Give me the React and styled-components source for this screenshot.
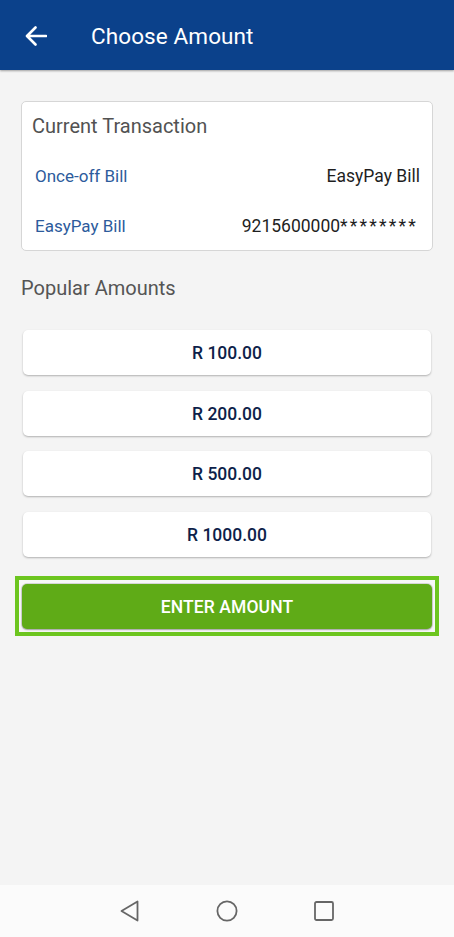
import React from "react";
import styled, { createGlobalStyle } from "styled-components";

const Global = createGlobalStyle`
  html, body { margin: 0; padding: 0; }
  body { font-family: Roboto, "Noto Sans", Arial, sans-serif; background: #f4f4f4; }
  * { box-sizing: border-box; }
`;

const Screen = styled.div`
  height: 100vh;
  display: flex;
  flex-direction: column;
  background: #f4f4f4;
`;

const Header = styled.header`
  height: 70px;
  flex: none;
  background: #0b418b;
  display: flex;
  align-items: center;
  padding-left: 24px;
  padding-top: 2px;
  box-shadow: 0 1px 2px rgba(0, 0, 0, 0.35);
  position: relative;
  z-index: 1;
`;

const BackButton = styled.button`
  border: 0;
  background: none;
  padding: 0;
  width: 23px;
  height: 22px;
  display: flex;
  align-items: center;
  justify-content: center;
  color: #fff;
`;

const Title = styled.h1`
  margin: 0 0 0 44px;
  font-size: 22.5px;
  font-weight: 400;
  color: #fff;
  letter-spacing: 0.1px;
`;

const Main = styled.main`
  flex: 1;
  padding: 31px 21px 0;
  display: flex;
  flex-direction: column;
`;

const Card = styled.section`
  background: #fff;
  border: 1px solid #d6d6d6;
  border-radius: 5px;
  display: flex;
  flex-direction: column;
  padding: 0 12px 0 10px;
`;

const CardTitle = styled.div`
  height: 49px;
  line-height: 49px;
  font-size: 20px;
  color: #525252;
`;

const InfoRow = styled.div`
  height: 50px;
  display: flex;
  align-items: center;
  justify-content: space-between;
  padding-left: 3px;
  margin-bottom: ${(p) => (p.$last ? "-1px" : "0")};
`;

const InfoLabel = styled.span`
  font-size: 17px;
  color: #2d5b9c;
`;

const InfoValue = styled.span`
  font-size: 17.5px;
  color: #1f1f1f;
  margin-right: ${(p) => p.$shift || 0}px;
`;

const Mask = styled.span`
  letter-spacing: 2.2px;
`;

const SectionTitle = styled.h2`
  margin: 25px 0 0;
  font-size: 20px;
  font-weight: 400;
  color: #555;
  line-height: 24px;
`;

const AmountList = styled.div`
  margin-top: 30px;
  display: flex;
  flex-direction: column;
  gap: 15.5px;
  padding: 0 2px;
`;

const AmountButton = styled.button`
  height: 45px;
  border: 0;
  border-radius: 5px;
  background: #fff;
  box-shadow: 0 1px 2px rgba(0, 0, 0, 0.28);
  font-family: Roboto, Arial, sans-serif;
  font-size: 17.5px;
  font-weight: 500;
  color: #0e1f4a;
  padding-top: 2px;
`;

const FocusRing = styled.div`
  margin: 19px -6px 0;
  border: 4px solid #6cc51f;
  padding: 4px 3px 3px;
  background: #f7f7f7;
`;

const PrimaryButton = styled.button`
  width: 100%;
  height: 45px;
  border: 0;
  border-radius: 5px;
  background: #5fab17;
  box-shadow: 0 0 0 1px rgba(0, 0, 0, 0.12), 0 1px 2px rgba(0, 0, 0, 0.25);
  color: #fff;
  font-family: Roboto, Arial, sans-serif;
  font-size: 17.5px;
  font-weight: 500;
  letter-spacing: 0.1px;
  padding-top: 3px;
`;

const NavBar = styled.nav`
  height: 52px;
  flex: none;
  background: #fbfbfb;
  display: flex;
  align-items: center;
  justify-content: center;
  gap: 73px;
`;

const NavIcon = styled.svg`
  width: 24px;
  height: 24px;
  display: block;
`;

const amounts = ["R 100.00", "R 200.00", "R 500.00", "R 1000.00"];

export default function App() {
  return (
    <>
      <Global />
      <Screen>
        <Header>
          <BackButton aria-label="Back">
            <svg width="22" height="20" viewBox="0 0 22 20" fill="none">
              <path
                d="M21 10H2.5M10.5 1.5L2 10l8.5 8.5"
                stroke="#fff"
                strokeWidth="2.6"
                strokeLinecap="round"
                strokeLinejoin="round"
              />
            </svg>
          </BackButton>
          <Title>Choose Amount</Title>
        </Header>
        <Main>
          <Card>
            <CardTitle>Current Transaction</CardTitle>
            <InfoRow>
              <InfoLabel>Once-off Bill</InfoLabel>
              <InfoValue>EasyPay Bill</InfoValue>
            </InfoRow>
            <InfoRow $last>
              <InfoLabel>EasyPay Bill</InfoLabel>
              <InfoValue $shift={2}>
                9215600000<Mask>********</Mask>
              </InfoValue>
            </InfoRow>
          </Card>
          <SectionTitle>Popular Amounts</SectionTitle>
          <AmountList>
            {amounts.map((a) => (
              <AmountButton key={a}>{a}</AmountButton>
            ))}
          </AmountList>
          <FocusRing>
            <PrimaryButton>ENTER AMOUNT</PrimaryButton>
          </FocusRing>
        </Main>
        <NavBar>
          <NavIcon viewBox="0 0 24 24" fill="none">
            <path
              d="M19.5 2.5v19L3.5 12z"
              stroke="#666"
              strokeWidth="1.8"
              strokeLinejoin="round"
            />
          </NavIcon>
          <NavIcon viewBox="0 0 24 24" fill="none">
            <circle cx="12" cy="12" r="9.6" stroke="#666" strokeWidth="1.8" />
          </NavIcon>
          <NavIcon viewBox="0 0 24 24" fill="none">
            <rect
              x="3"
              y="3"
              width="18"
              height="18"
              rx="1.5"
              stroke="#666"
              strokeWidth="1.8"
            />
          </NavIcon>
        </NavBar>
      </Screen>
    </>
  );
}
